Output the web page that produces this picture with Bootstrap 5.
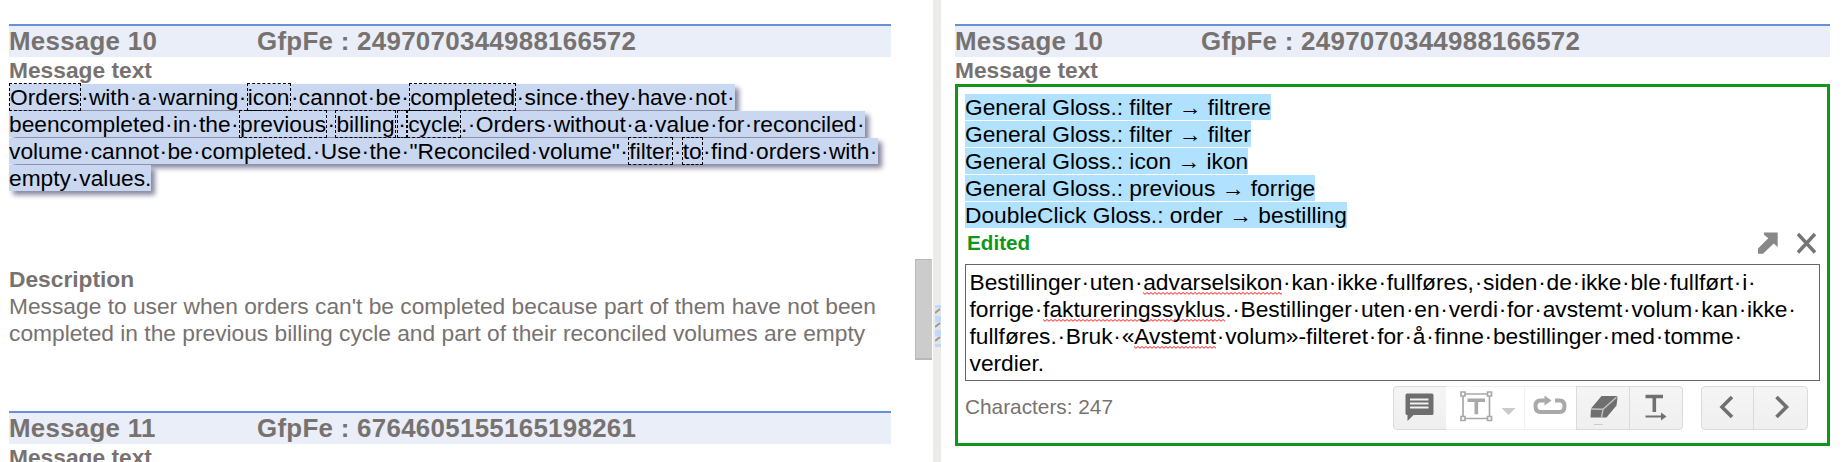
<!DOCTYPE html>
<html lang="en">
<head>
<meta charset="utf-8">
<title>Translation editor</title>
<meta name="viewport" content="width=device-width, initial-scale=1">
<link href="https://cdn.jsdelivr.net/npm/bootstrap@5.3.0/dist/css/bootstrap.min.css" rel="stylesheet">
<style>
body{font-family:"Liberation Sans",Arial,sans-serif;font-size:22.75px;line-height:27px;color:#777270;background:#fff;height:462px;overflow:hidden}
.pane-src{width:933px;padding:24px 42px 0 9px}
.divider{width:8px;background:#ebebe9}
.grip{width:6px;height:42px;top:305px;left:2px}
.thumb{left:915px;top:259px;width:17px;height:101px;background:#ccc;border:1px solid #b8b8b8;border-right:0;border-bottom-width:2px}
.pane-dst{padding:24px 16px 0 14px}
.msg-head{height:33px;border-top:2px solid #6690da;background:#e9eef9;font-weight:700;font-size:25.9px;line-height:30px;white-space:nowrap}
.msg-num{width:248px;letter-spacing:.27px}
.pane-dst .msg-num{width:246px}
.msg-id{letter-spacing:.29px}
.sub-h{font-weight:700;line-height:26px;height:27px}
.lines{white-space:nowrap}
.src{color:#000;height:167px}
.desc{height:160px;padding-top:15px}
.ln{height:27px;line-height:26px}
.hl{display:inline-block;height:26px;line-height:26px;vertical-align:top}
.src .hl{background:#c9d7f1;box-shadow:4px 4px 5px #8888a0}
.term{border:1px dashed #000}
.term-end{margin-right:1.3px}
.src .wsp{padding:0 .4px}
.editor{border:3px solid #109618;height:362px;padding:7px 7px 0}
.gloss{color:#000}
.gloss .hl{background:#b0e1ff}
.arr{font-family:"Liberation Serif",serif;line-height:1}
.status{height:35px}
.edited{color:#109618;font-weight:700;font-size:20.7px;line-height:28px;padding-left:2px}
.tbox{border:1px solid #666;color:#000;height:117px;padding:4px 0 0 3.5px}
.tbox .wsp{padding:0 .75px}
.sp{background:url("data:image/svg+xml,%3Csvg xmlns='http://www.w3.org/2000/svg' width='4' height='3'%3E%3Cpath d='M0 .5 2 2.300 4 .5' fill='none' stroke='%23f00' stroke-width='.9'/%3E%3C/svg%3E") repeat-x left bottom}
.foot{padding:5px 12px 0 0}
.chars{font-size:20.8px;line-height:42px}
.tool{height:44px;border:1px solid #dadada;background:linear-gradient(#f5f5f5,#efefef);padding:0;margin-left:-1px}
.tool.off{background:#fff;border-color:#f0f0f0}
.tool svg,.status svg{display:block}
.nav-pair{margin-left:19px}
</style>
</head>
<body>
<div class="d-flex h-100 position-relative">
<section class="pane-src">
 <div class="msg-head d-flex"><div class="msg-num">Message 10</div><div class="msg-id">GfpFe : 2497070344988166572</div></div>
 <div class="sub-h">Message text</div>
 <div class="lines src ws">
  <div class="ln"><span class="hl"><span class="term">Orders</span>·with·a·warning·<span class="term">icon</span>·cannot·be·<span class="term">completed</span>·since·they·have·not·</span></div>
  <div class="ln"><span class="hl">beencompleted·in·the·<span class="term">previous</span>·<span class="term term-end">billing</span><span class="term">·</span><span class="term">cycle</span>.·Orders·without·a·value·for·reconciled·</span></div>
  <div class="ln"><span class="hl">volume·cannot·be·completed.·Use·the·"Reconciled·volume"·<span class="term">filter</span>·<span class="term">to</span>·find·orders·with·</span></div>
  <div class="ln"><span class="hl">empty·values.</span></div>
 </div>
 <div class="lines desc">
  <div class="sub-h">Description</div>
  <div class="ln">Message to user when orders can't be completed because part of them have not been</div>
  <div class="ln">completed in the previous billing cycle and part of their reconciled volumes are empty</div>
 </div>
 <div class="msg-head d-flex"><div class="msg-num">Message 11</div><div class="msg-id">GfpFe : 6764605155165198261</div></div>
 <div class="sub-h">Message text</div>
</section>
<div class="thumb position-absolute"></div>
<div class="divider position-relative">
 <svg class="grip position-absolute" viewBox="0 0 6 42"><path fill="#c1d8ff" d="M0 0h6v42H0z"/><path fill="#e4e4e4" d="M0 3h6v8H0zM0 17h6v8H0zM0 31h6v8H0z"/><path d="M0 8 5 4M0 22l5-4M0 36l5-4" stroke="#999" stroke-width="2"/></svg>
</div>
<section class="pane-dst flex-grow-1">
 <div class="msg-head d-flex"><div class="msg-num">Message 10</div><div class="msg-id">GfpFe : 2497070344988166572</div></div>
 <div class="sub-h">Message text</div>
 <div class="editor">
  <div class="gloss lines">
   <div class="ln"><span class="hl">General Gloss.: filter <span class="arr">→</span> filtrere</span></div>
   <div class="ln"><span class="hl">General Gloss.: filter <span class="arr">→</span> filter</span></div>
   <div class="ln"><span class="hl">General Gloss.: icon <span class="arr">→</span> ikon</span></div>
   <div class="ln"><span class="hl">General Gloss.: previous <span class="arr">→</span> forrige</span></div>
   <div class="ln"><span class="hl">DoubleClick Gloss.: order <span class="arr">→</span> bestilling</span></div>
  </div>
  <div class="status d-flex justify-content-between">
   <div class="edited">Edited</div>
   <svg width="65" height="35" viewBox="1755 229 65 35"><path fill="#888" d="M1764 232.5h13.7V247l-4-3.6-10.7 10.3h-5v-5.2l10.3-10.2-4.3-3.6z"/><path d="m1798 234 17 18.500m0-18.500-17 18.500" stroke="#757575" stroke-width="3.400"/></svg>
  </div>
  <div class="tbox lines ws">
   <div class="ln">Bestillinger·uten·<span class="sp">advarselsikon</span>·kan·ikke·fullføres,·siden·de·ikke·ble·fullført·i·</div>
   <div class="ln">forrige·<span class="sp">faktureringssyklus</span>.·Bestillinger·uten·en·verdi·for·avstemt·volum·kan·ikke·</div>
   <div class="ln">fullføres.·Bruk·«<span class="sp">Avstemt</span>·volum»-filteret·for·å·finne·bestillinger·med·tomme·</div>
   <div class="ln">verdier.</div>
  </div>
  <div class="foot d-flex">
   <div class="chars me-auto">Characters: 247</div>
   <div class="d-flex">
    <div class="tool rounded-start-1"><svg width="52" height="42" viewBox="1394 387 52 42"><path fill="#6e6e6e" d="M1407 393.500h25q1.500 0 1.500 1.500v18.500q0 1.500-1.500 1.500h-18.500l-6 6v-6q-2 0-2-1.500V395q0-1.500 1.500-1.500z"/><path d="M1410 399.500h18.500m-18.500 4h18.500m-18.500 4h18.500" stroke="#f2f2f2" stroke-width="2"/></svg></div>
    <div class="tool off border-start-0"><svg width="78" height="42" viewBox="1446 387 78 42"><g fill="none" stroke="#a9a9a9" stroke-width="1.700"><path d="M1463 394h26.500v24.500H1463z"/><g fill="#fff"><path d="M1461 392h4v4h-4zM1487.500 392h4v4h-4zM1461 416.500h4v4h-4zM1487.500 416.500h4v4h-4z"/></g></g><path d="M1467.500 400.300h17.500M1476.300 400v14.300" stroke="#a9a9a9" stroke-width="3.600"/><path fill="#cbcbcb" d="M1501.500 408h14l-7 7z"/></svg></div>
    <div class="tool off"><svg width="51" height="42" viewBox="1525 387 51 42"><path d="M1548 400.500h-7.500q-5 0-5 5.500 0 6 5 6h19q5 0 5-6 0-5.500-5-5.500h-4.500" fill="none" stroke="#a9a9a9" stroke-width="4"/><path fill="#a9a9a9" d="m1544.500 395.500 7 5-7 5z"/></svg></div>
    <div class="tool"><svg width="52" height="42" viewBox="1577 387 52 42"><path fill="#6f6f6f" d="M1601.500 396h14.500q2 0 1.500 2l-1 7.500-10 12h-16l.5-9z"/><path d="m1591 409 12 .300 13.500-12M1603 409.300l-1.500 8" fill="none" stroke="#c4c4c4" stroke-width="1.400"/><path d="M1594 424.500h9" stroke="#ccc" stroke-width="1"/></svg></div>
    <div class="tool rounded-end-1"><svg width="52" height="42" viewBox="1630 387 52 42"><path d="M1645.500 396.500h17.500M1654.300 396v16" stroke="#707070" stroke-width="3.600"/><path d="M1645.500 416.500h17" stroke="#707070" stroke-width="2"/><path fill="#707070" d="m1661 412.500 5.500 4-5.500 4z"/></svg></div>
   </div>
   <div class="d-flex nav-pair">
    <div class="tool rounded-start-1"><svg width="51" height="42" viewBox="1702 387 51 42"><path d="m1732 397-10 10 10 10" fill="none" stroke="#707070" stroke-width="3.600"/></svg></div>
    <div class="tool rounded-end-1"><svg width="53" height="42" viewBox="1754 387 53 42"><path d="m1776.500 397 10 10-10 10" fill="none" stroke="#707070" stroke-width="3.600"/></svg></div>
   </div>
  </div>
 </div>
</section>
</div>
<script>
// Wrap the visible whitespace marks so they can be spaced on their own.
document.querySelectorAll('.ws').forEach(e=>{e.innerHTML=e.innerHTML.replace(/·/g,'<span class="wsp">·</span>')});
</script>
</body>
</html>
